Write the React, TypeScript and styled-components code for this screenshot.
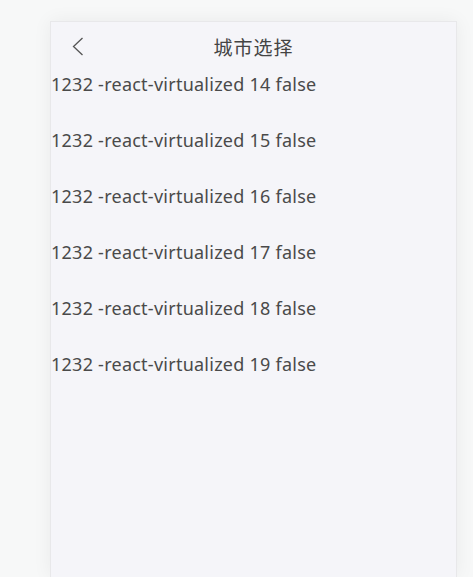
import React from "react";
import styled, { createGlobalStyle } from "styled-components";

const Global = createGlobalStyle`
  html, body { margin: 0; padding: 0; background: #f7f8f8; height: 100%; overflow: hidden; }
  body { font-family: "Noto Sans", "Noto Sans CJK SC", sans-serif; }
`;

const Page = styled.div`
  padding: 21px 0 0 50px;
  height: 577px;
  box-sizing: border-box;
  overflow: hidden;
`;

const Phone = styled.div`
  width: 407px;
  height: 556px;
  background: #f5f5f9;
  border: 1px solid #e8e8ea;
  border-bottom: none;
  box-sizing: border-box;
  box-shadow: 0 0 18px rgba(0, 0, 0, 0.06);
  display: flex;
  flex-direction: column;
`;

const NavBar = styled.div`
  height: 50px;
  display: flex;
  align-items: center;
  position: relative;
  padding-bottom: 2px;
  box-sizing: border-box;
`;

const Back = styled.div`
  position: absolute;
  left: 21px;
  top: 15px;
  width: 12px;
  height: 20px;
  display: flex;
`;

const Title = styled.div`
  flex: 1;
  text-align: center;
  font-size: 19px;
  letter-spacing: 1px;
  color: #444;
  font-family: "Noto Sans CJK SC", sans-serif;
`;

const Row = styled.div`
  height: 56px;
  font-size: 18px;
  letter-spacing: 0.25px;
  line-height: 24px;
  color: #4a4a4a;
  font-family: "Noto Sans", sans-serif;
  white-space: nowrap;
`;

export default function App() {
  const rows = [14, 15, 16, 17, 18, 19];
  return (
    <>
      <Global />
      <Page>
        <Phone>
          <NavBar>
            <Back>
              <svg width="12" height="20" viewBox="0 0 12 20">
                <path d="M10.5 1 L1.5 9.5 L10.5 18" fill="none" stroke="#555" strokeWidth="1.3" />
              </svg>
            </Back>
            <Title>城市选择</Title>
          </NavBar>
          {rows.map((n) => (
            <Row key={n}>1232 -react-virtualized {n} false</Row>
          ))}
        </Phone>
      </Page>
    </>
  );
}
